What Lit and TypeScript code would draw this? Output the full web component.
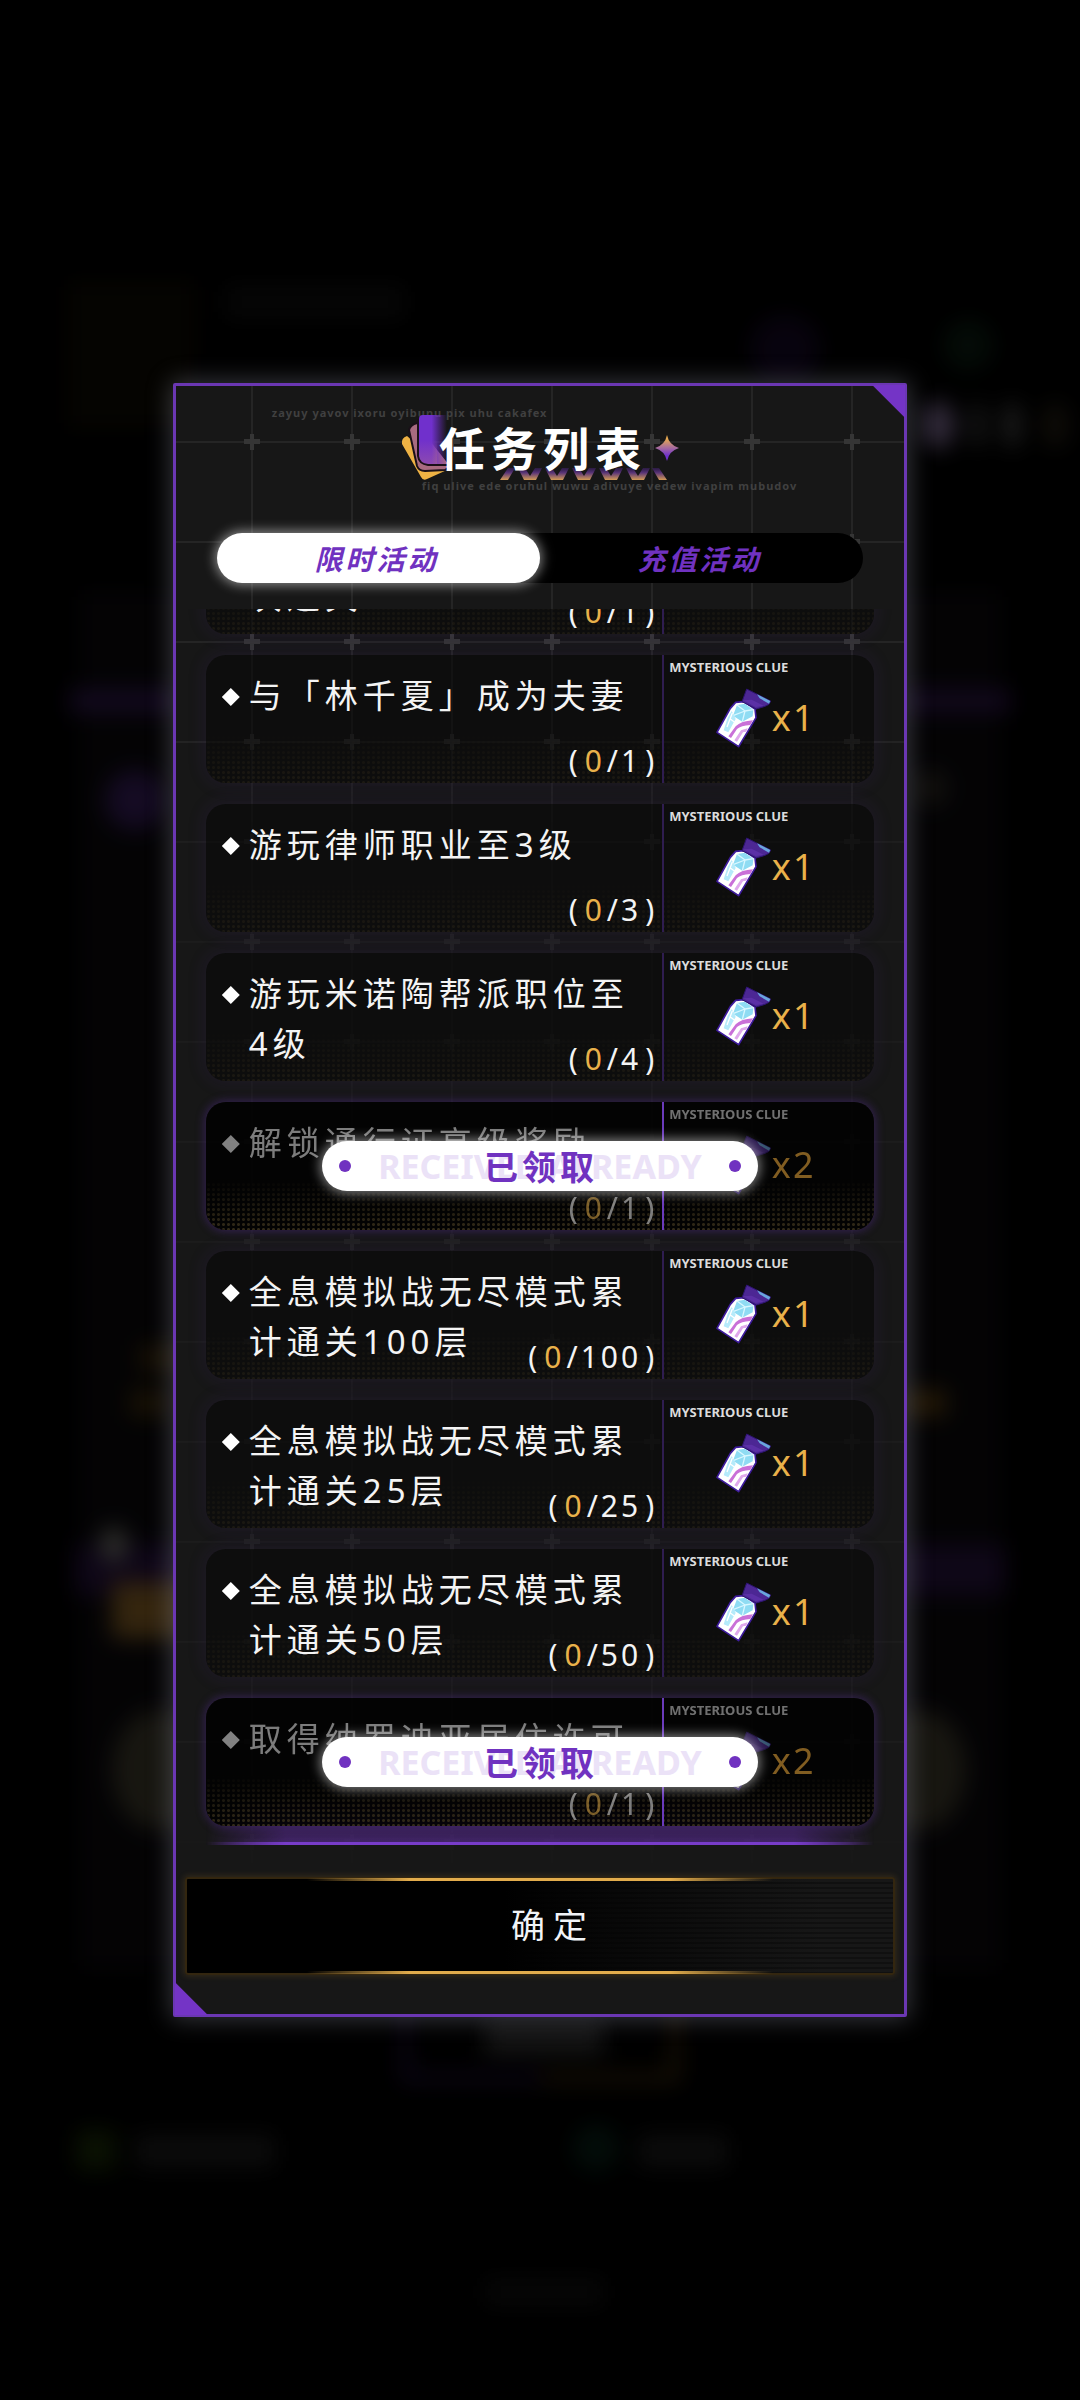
import { LitElement, html, css, svg } from "lit";
import { customElement, property, state, query } from "lit/decorators.js";
import { classMap } from "lit/directives/class-map.js";

interface Task {
  title: string;
  done: number;
  total: number;
  reward: number;
  claimed?: boolean;
}

const TASKS: Task[] = [
  { title: "全息模拟战无尽模式首次通关", done: 0, total: 1, reward: 1 },
  { title: "与「林千夏」成为夫妻", done: 0, total: 1, reward: 1 },
  { title: "游玩律师职业至3级", done: 0, total: 3, reward: 1 },
  { title: "游玩米诺陶帮派职位至4级", done: 0, total: 4, reward: 1 },
  { title: "解锁通行证高级奖励", done: 0, total: 1, reward: 2, claimed: true },
  { title: "全息模拟战无尽模式累计通关100层", done: 0, total: 100, reward: 1 },
  { title: "全息模拟战无尽模式累计通关25层", done: 0, total: 25, reward: 1 },
  { title: "全息模拟战无尽模式累计通关50层", done: 0, total: 50, reward: 1 },
  { title: "取得纳罗迪亚居住许可", done: 0, total: 1, reward: 2, claimed: true },
];

/** Small potion bottle used as the reward icon. */
const bottle = html`
  <svg class="bottle" viewBox="30 20 171 186" aria-hidden="true">
    <path d="M92 66 L116 64 L150 86 L153 112 L101 199 L36 156 L76 84 Z"
      fill="#fff" stroke="#3d1a9c" stroke-width="5" stroke-linejoin="round" />
    <path d="M96 74 L120 70 L145 88 L143 108 L112 124 L84 106 Z" fill="#8fdcf3" />
    <path d="M96 74 L120 92 L112 124 M120 92 L145 88 M120 92 L84 106" stroke="#d9f7ff" stroke-width="4" fill="none" />
    <path d="M80 92 L92 116 L70 156 L56 150 L68 112 Z" fill="#b5eafa" />
    <path d="M82 98 L66 140 M76 116 L92 128" stroke="#fff" stroke-width="4" fill="none" />
    <path d="M144 120 Q108 122 92 138 L70 168 L78 173 L96 146 Q108 136 136 134 Z" fill="#c970d8" />
    <path d="M128 144 L108 150 L88 180 L96 184 L114 156 L124 154 Z" fill="#dfa8ec" />
    <path d="M125 26 L197 62 L192 72 L180 78 L154 86 L111 64 Z"
      fill="#4c2794" stroke="#2d1470" stroke-width="3" stroke-linejoin="round" />
    <path d="M114 60 L152 80 L176 76 L140 58 Z" fill="#5b30a6" />
    <path d="M156 42 L196 62 L192 70 L164 54 Z" fill="#69a6dd" />
  </svg>
`;

@customElement("task-row")
export class TaskRow extends LitElement {
  @property({ attribute: false }) task!: Task;

  static styles = css`
    :host {
      display: block;
    }
    .row {
      position: relative;
      display: grid;
      grid-template-columns: minmax(0, 1fr) 212px;
      min-height: 128px;
      border-radius: 20px;
      background: rgba(5, 5, 5, 0.55);
      box-shadow: 0 0 16px 4px rgba(70, 40, 130, 0.12);
    }
    .row::before {
      content: "";
      position: absolute;
      inset: 0;
      border-radius: 20px;
      background: radial-gradient(circle at center, #40361f 1px, transparent 2px) 0 0 / 5px 5px;
      opacity: 0.3;
      mask-image: linear-gradient(transparent 60%, #000);
    }
    .claimed {
      background: rgba(0, 0, 0, 0.85);
      box-shadow: 0 0 8px 2px rgba(96, 48, 176, 0.35);
    }
    .claimed::before {
      opacity: 0.8;
    }
    .task {
      position: relative;
      display: grid;
      padding: 16px 8px 0 16px;
    }
    .label {
      grid-area: 1 / 1;
      display: grid;
      grid-template-columns: 18px minmax(0, 1fr);
      column-gap: 9px;
      align-items: start;
      padding-right: 14px;
    }
    .diamond {
      width: 18px;
      height: 18px;
      margin-top: 17px;
      background: #fff;
      clip-path: polygon(50% 0, 100% 50%, 50% 100%, 0 50%);
    }
    .text {
      margin: 0;
      font-size: 33px;
      font-weight: 400;
      line-height: 50px;
      letter-spacing: 5px;
      color: #f4f4f4;
      font-family: "Noto Sans", "Noto Sans CJK SC", sans-serif;
    }
    .count {
      grid-area: 1 / 1;
      place-self: end;
      display: flex;
      padding-bottom: 5px;
      font-size: 30px;
      line-height: 34px;
      letter-spacing: 3px;
      color: #f4f4f4;
    }
    .open {
      margin-right: 4px;
    }
    .close {
      margin-left: 4px;
      letter-spacing: 0;
    }
    .done {
      margin-right: 2px;
    }
    .done,
    .amount {
      color: #e9b14a;
    }
    .reward {
      position: relative;
      border-left: 2px solid #2f1d50;
      padding: 4px 5px 0;
    }
    .claimed .reward {
      border-left-color: #6a3abb;
    }
    .clue {
      font-size: 13px;
      font-weight: 700;
      line-height: 16px;
      color: #dcdcdc;
    }
    .prize {
      display: flex;
      align-items: center;
      justify-content: center;
      margin-top: 12px;
      padding-right: 8px;
    }
    .bottle {
      width: 57px;
      height: 62px;
    }
    .amount {
      font-size: 36px;
      line-height: 44px;
      letter-spacing: 2px;
    }
    .claimed .label,
    .claimed .count,
    .claimed .clue,
    .claimed .prize {
      opacity: 0.5;
    }
    .claimed .amount {
      color: #ffb640;
    }
    .badge {
      position: absolute;
      inset: 0;
      margin: auto;
      width: 436px;
      max-width: 90%;
      height: 50px;
      box-sizing: border-box;
      padding: 0 17px;
      border-radius: 25px;
      background: #fff;
      box-shadow: 0 0 12px 2px rgba(255, 255, 255, 0.5);
      display: flex;
      align-items: center;
      justify-content: space-between;
      color: #7032c0;
    }
    .dot {
      width: 12px;
      height: 12px;
      border-radius: 50%;
      background: #7032c0;
    }
    .words {
      display: grid;
      place-items: center;
      white-space: nowrap;
      font-weight: 700;
      font-size: 34px;
      line-height: 50px;
    }
    .words span {
      grid-area: 1 / 1;
    }
    .ghost {
      color: #ebe2f7;
    }
    .state {
      letter-spacing: 4px;
      padding-left: 2px;
      font-family: "Noto Sans CJK SC", sans-serif;
    }
  `;

  render() {
    const t = this.task;
    return html`
      <article class=${classMap({ row: true, claimed: !!t.claimed })}>
        <div class="task">
          <div class="label">
            <span class="diamond"></span>
            <h2 class="text">${t.title}</h2>
          </div>
          <div class="count">
            <span class="open">(</span><span class="done">${t.done}</span><span>/${t.total}</span><span class="close">)</span>
          </div>
        </div>
        <div class="reward">
          <div class="clue">MYSTERIOUS CLUE</div>
          <div class="prize">${bottle}<span class="amount">x${t.reward}</span></div>
        </div>
        ${t.claimed
          ? html`<div class="badge">
              <span class="dot"></span>
              <span class="words"><span class="ghost">RECEIVED ALREADY</span><span class="state">已领取</span></span>
              <span class="dot"></span>
            </div>`
          : null}
      </article>
    `;
  }
}

@customElement("app-root")
export class AppRoot extends LitElement {
  @state() private tab = 0;
  @query(".list") private list!: HTMLElement;

  static styles = css`
    :host {
      position: relative;
      display: grid;
      place-items: center;
      min-height: 100vh;
      background: #000;
      overflow: hidden;
      font-family: "Noto Sans", "Noto Sans CJK SC", sans-serif;
    }
    .scene {
      position: absolute;
      inset: 0;
      width: 100%;
      height: 100%;
      opacity: 0.7;
    }
    .dialog {
      position: relative;
      width: 68%;
      box-sizing: border-box;
      border: 3px solid #6b37b3;
      border-radius: 2px;
      background: #171717;
      box-shadow: 0 0 24px 2px rgba(160, 165, 182, 0.34);
      display: flex;
      flex-direction: column;
    }
    .mesh {
      position: absolute;
      inset: 0;
      width: 100%;
      height: 100%;
      mask-image: linear-gradient(#000 20%, rgba(0, 0, 0, 0.35) 30%, rgba(0, 0, 0, 0.35) 84%, transparent 92%);
    }
    .corner {
      position: absolute;
      width: 33px;
      height: 33px;
      background: #7434c6;
    }
    .corner.top {
      top: -1px;
      right: -1px;
      clip-path: polygon(0 0, 100% 0, 100% 100%);
    }
    .corner.bottom {
      bottom: -1px;
      left: -1px;
      clip-path: polygon(0 0, 100% 100%, 0 100%);
    }
    .header {
      position: relative;
      display: flex;
      flex-direction: column;
      padding: 18px 96px 38px;
    }
    .motto {
      font-size: 11px;
      font-weight: 700;
      line-height: 18px;
      letter-spacing: 1px;
      color: #404040;
      white-space: nowrap;
    }
    .motto.end {
      align-self: flex-end;
      padding-right: 11px;
    }
    .title {
      position: relative;
      align-self: center;
      margin: 0;
      padding: 0 0 6px 6px;
      font: 700 46px/49px "Noto Sans CJK SC", sans-serif;
      letter-spacing: 6px;
      color: #fff;
    }
    .title span {
      position: relative;
    }
    .ornament {
      position: absolute;
      left: -34px;
      top: -12px;
      width: 300px;
      height: 90px;
    }
    .tabs {
      position: relative;
      display: grid;
      grid-template-columns: 1fr 1fr;
      margin: 0 41px;
      border-radius: 25px;
      background: #000;
    }
    .tab {
      height: 50px;
      padding: 0 4px 0 0;
      border: 0;
      border-radius: 25px;
      background: transparent;
      color: #7032c0;
      font: italic 700 28px/50px "Noto Sans CJK SC", sans-serif;
      letter-spacing: 3px;
      cursor: pointer;
    }
    .tab.active {
      background: #fff;
      box-shadow: 0 0 12px 2px rgba(255, 255, 255, 0.5);
    }
    .viewport {
      position: relative;
      margin-top: 26px;
    }
    .viewport::before,
    .viewport::after {
      content: "";
      position: absolute;
      left: 30px;
      right: 30px;
      bottom: 0;
      pointer-events: none;
      mask-image: linear-gradient(90deg, transparent, #000 12%, #000 88%, transparent);
    }
    .viewport::before {
      height: 48px;
      background: linear-gradient(transparent, rgba(112, 50, 192, 0.5));
    }
    .viewport::after {
      height: 3px;
      background: #783cca;
    }
    .list {
      position: relative;
      display: flex;
      flex-direction: column;
      gap: 21px;
      max-height: 1236px;
      box-sizing: border-box;
      margin: 0;
      padding: 0 30px 19px;
      list-style: none;
      overflow-y: auto;
      scrollbar-width: none;
    }
    .item {
      flex: none;
    }
    .confirm {
      position: relative;
      height: 98px;
      margin: 32px 9px 39px;
      padding: 0 0 4px 26px;
      border: 2px solid #33260f;
      border-radius: 3px;
      background:
        repeating-linear-gradient(transparent 0 3px, rgba(0, 0, 0, 0.3) 3px 5px),
        linear-gradient(90deg, #000 45%, #171717 90%);
      box-shadow: 0 0 6px 1px rgba(180, 130, 40, 0.2);
      color: #f1f4f8;
      font: 400 34px/50px "Noto Sans CJK SC", sans-serif;
      letter-spacing: 8px;
      cursor: pointer;
    }
    .confirm::before,
    .confirm::after {
      content: "";
      position: absolute;
      left: 17%;
      right: 17%;
      height: 3px;
      background: linear-gradient(90deg, transparent, #e2ac4c 22%, #e2ac4c 78%, transparent);
    }
    .confirm::before {
      top: -1px;
    }
    .confirm::after {
      bottom: -1px;
    }
  `;

  firstUpdated() {
    requestAnimationFrame(() => this.scrollToEnd());
    this.updateComplete.then(() => this.scrollToEnd());
  }

  private scrollToEnd() {
    this.list.scrollTop = this.list.scrollHeight;
  }

  private renderScene() {
    return html`
      <svg class="scene" viewBox="0 0 1080 2400" preserveAspectRatio="none" aria-hidden="true">
        <defs>
          <filter id="soft" x="-10%" y="-10%" width="120%" height="120%" color-interpolation-filters="sRGB">
            <feGaussianBlur stdDeviation="11" />
          </filter>
        </defs>
        <g filter="url(#soft)">
          <rect x="78" y="590" width="924" height="1380" fill="#060507" />
          <rect x="70" y="690" width="110" height="22" fill="#1c0e2e" />
          <rect x="900" y="690" width="110" height="22" fill="#1a0c2a" />
          <rect x="66" y="280" width="130" height="150" fill="#080602" />
          <rect x="225" y="285" width="180" height="34" fill="#090909" />
          <circle cx="785" cy="350" r="36" fill="#0b0514" />
          <circle cx="968" cy="345" r="26" fill="#06100a" />
          <ellipse cx="938" cy="425" rx="17" ry="24" fill="#463c52" />
          <ellipse cx="978" cy="425" rx="7" ry="24" fill="#282828" />
          <ellipse cx="1012" cy="425" rx="8" ry="24" fill="#303030" />
          <ellipse cx="1055" cy="425" rx="14" ry="24" fill="#15120c" />
          <circle cx="135" cy="800" r="30" fill="#1e1032" />
          <circle cx="930" cy="788" r="18" fill="#1a1814" />
          <rect x="140" y="1345" width="60" height="26" fill="#241a08" />
          <rect x="130" y="1390" width="40" height="26" fill="#241a08" />
          <rect x="900" y="1390" width="46" height="26" fill="#33240a" />
          <rect x="75" y="1545" width="930" height="50" fill="#150a22" />
          <ellipse cx="114" cy="1545" rx="14" ry="18" fill="#40403c" />
          <rect x="112" y="1582" width="80" height="56" fill="#4a3515" />
          <ellipse cx="160" cy="1770" rx="48" ry="60" fill="#222018" />
          <ellipse cx="918" cy="1770" rx="48" ry="60" fill="#222018" />
          <path d="M405 1990 V2078 H541" fill="none" stroke="#170b28" stroke-width="8" />
          <path d="M541 2078 H675 V1990" fill="none" stroke="#2e200a" stroke-width="8" />
          <rect x="484" y="2020" width="120" height="34" fill="#1f1f1f" />
          <rect x="76" y="2130" width="40" height="40" fill="#0f1904" />
          <rect x="135" y="2134" width="140" height="34" fill="#101010" />
          <circle cx="596" cy="2148" r="24" fill="#04120d" />
          <rect x="638" y="2134" width="90" height="34" fill="#101010" />
          <rect x="484" y="2278" width="120" height="28" fill="#0a0a0a" />
        </g>
      </svg>
    `;
  }

  private renderOrnament() {
    const peaks = [0, 1, 2, 3, 4];
    return html`
      <svg class="ornament" viewBox="0 0 300 90" aria-hidden="true">
        <defs>
          <linearGradient id="fade" x1="0" x2="1">
            <stop offset="0.45" stop-color="#7030cc" />
            <stop offset="1" stop-color="#7030cc" stop-opacity="0" />
          </linearGradient>
          <linearGradient id="tint" x1="0" x2="0" y1="0" y2="1">
            <stop offset="0.5" stop-color="#b5708a" stop-opacity="0" />
            <stop offset="1" stop-color="#b5708a" stop-opacity="0.4" />
          </linearGradient>
          <linearGradient id="wave" x1="0" x2="0" y1="0" y2="1">
            <stop offset="0" stop-color="#40206e" stop-opacity="0.5" />
            <stop offset="0.4" stop-color="#5a3578" />
            <stop offset="1" stop-color="#d39a55" />
          </linearGradient>
          <linearGradient id="spark" x1="0" x2="0" y1="0" y2="1">
            <stop offset="0.15" stop-color="#e5a850" />
            <stop offset="0.5" stop-color="#a56aa0" />
            <stop offset="0.8" stop-color="#7030cc" />
          </linearGradient>
        </defs>
        <path d="M3 34 Q2 28 8 26 L48 60 L28 69 Q24 71 22 67 Z" fill="#eeb244" />
        <path d="M10 20 Q11 15 18 13 L52 56 L46 60 L26 61 Q20 61 18 56 Z" fill="#a86b80" stroke="#1a1018" stroke-width="2" />
        <path d="M24 5 H48 V54 H30 Q20 54 20 46 V9 Q20 5 24 5 Z" fill="url(#fade)" />
        <path d="M24 5 H38 V54 H30 Q20 54 20 46 V9 Q20 5 24 5 Z" fill="url(#tint)" />
        <path d="M19 9 V46 Q20 54 29 55 H50" fill="none" stroke="#1a1018" stroke-width="2" />
        <g fill="url(#wave)">
          <path d="M109 58 h7 l-7 12 h-8 Z" />
          ${peaks.map(
            (i) => svg`<path transform=${`translate(${131 + i * 27} 58)`}
              d="M-12 0 H-5 L0 8 L5 0 H12 L6 12 H-6 Z" />`,
          )}
          <path d="M253 58 h7 l8 12 h-8 Z" />
        </g>
        <path d="M268 25 Q270 35 280 38 Q270 41 268 51 Q266 41 256 38 Q266 35 268 25 Z" fill="url(#spark)" />
      </svg>
    `;
  }

  render() {
    const tabs = ["限时活动", "充值活动"];
    return html`
      ${this.renderScene()}
      <section class="dialog" role="dialog" aria-labelledby="title">
        <svg class="mesh" aria-hidden="true">
          <defs>
            <pattern id="cell" x="26" y="6" width="100" height="100" patternUnits="userSpaceOnUse">
              <path d="M50 0 V100 M0 50 H100" stroke="#333" stroke-width="1" />
              <path d="M48 42 h4 v5 h6 v5 h-6 v6 h-4 v-6 h-6 v-5 h6 Z" fill="#353535" />
            </pattern>
          </defs>
          <rect width="100%" height="100%" fill="url(#cell)" />
        </svg>
        <span class="corner top"></span>
        <span class="corner bottom"></span>
        <header class="header">
          <div class="motto">zayuy yavov ixoru oyibunu pix uhu cakafex</div>
          <h1 class="title" id="title">${this.renderOrnament()}<span>任务列表</span></h1>
          <div class="motto end">fiq ulive ede oruhul wuwu adivuye vedew ivapim mubudov</div>
        </header>
        <div class="tabs" role="tablist">
          ${tabs.map(
            (name, i) => html`<button
              class=${classMap({ tab: true, active: this.tab === i })}
              role="tab"
              aria-selected=${this.tab === i ? "true" : "false"}
              @click=${() => (this.tab = i)}
            >${name}</button>`,
          )}
        </div>
        <div class="viewport">
          <ul class="list">
            ${TASKS.map((task) => html`<li class="item"><task-row .task=${task}></task-row></li>`)}
          </ul>
        </div>
        <button class="confirm">确定</button>
      </section>
    `;
  }
}
